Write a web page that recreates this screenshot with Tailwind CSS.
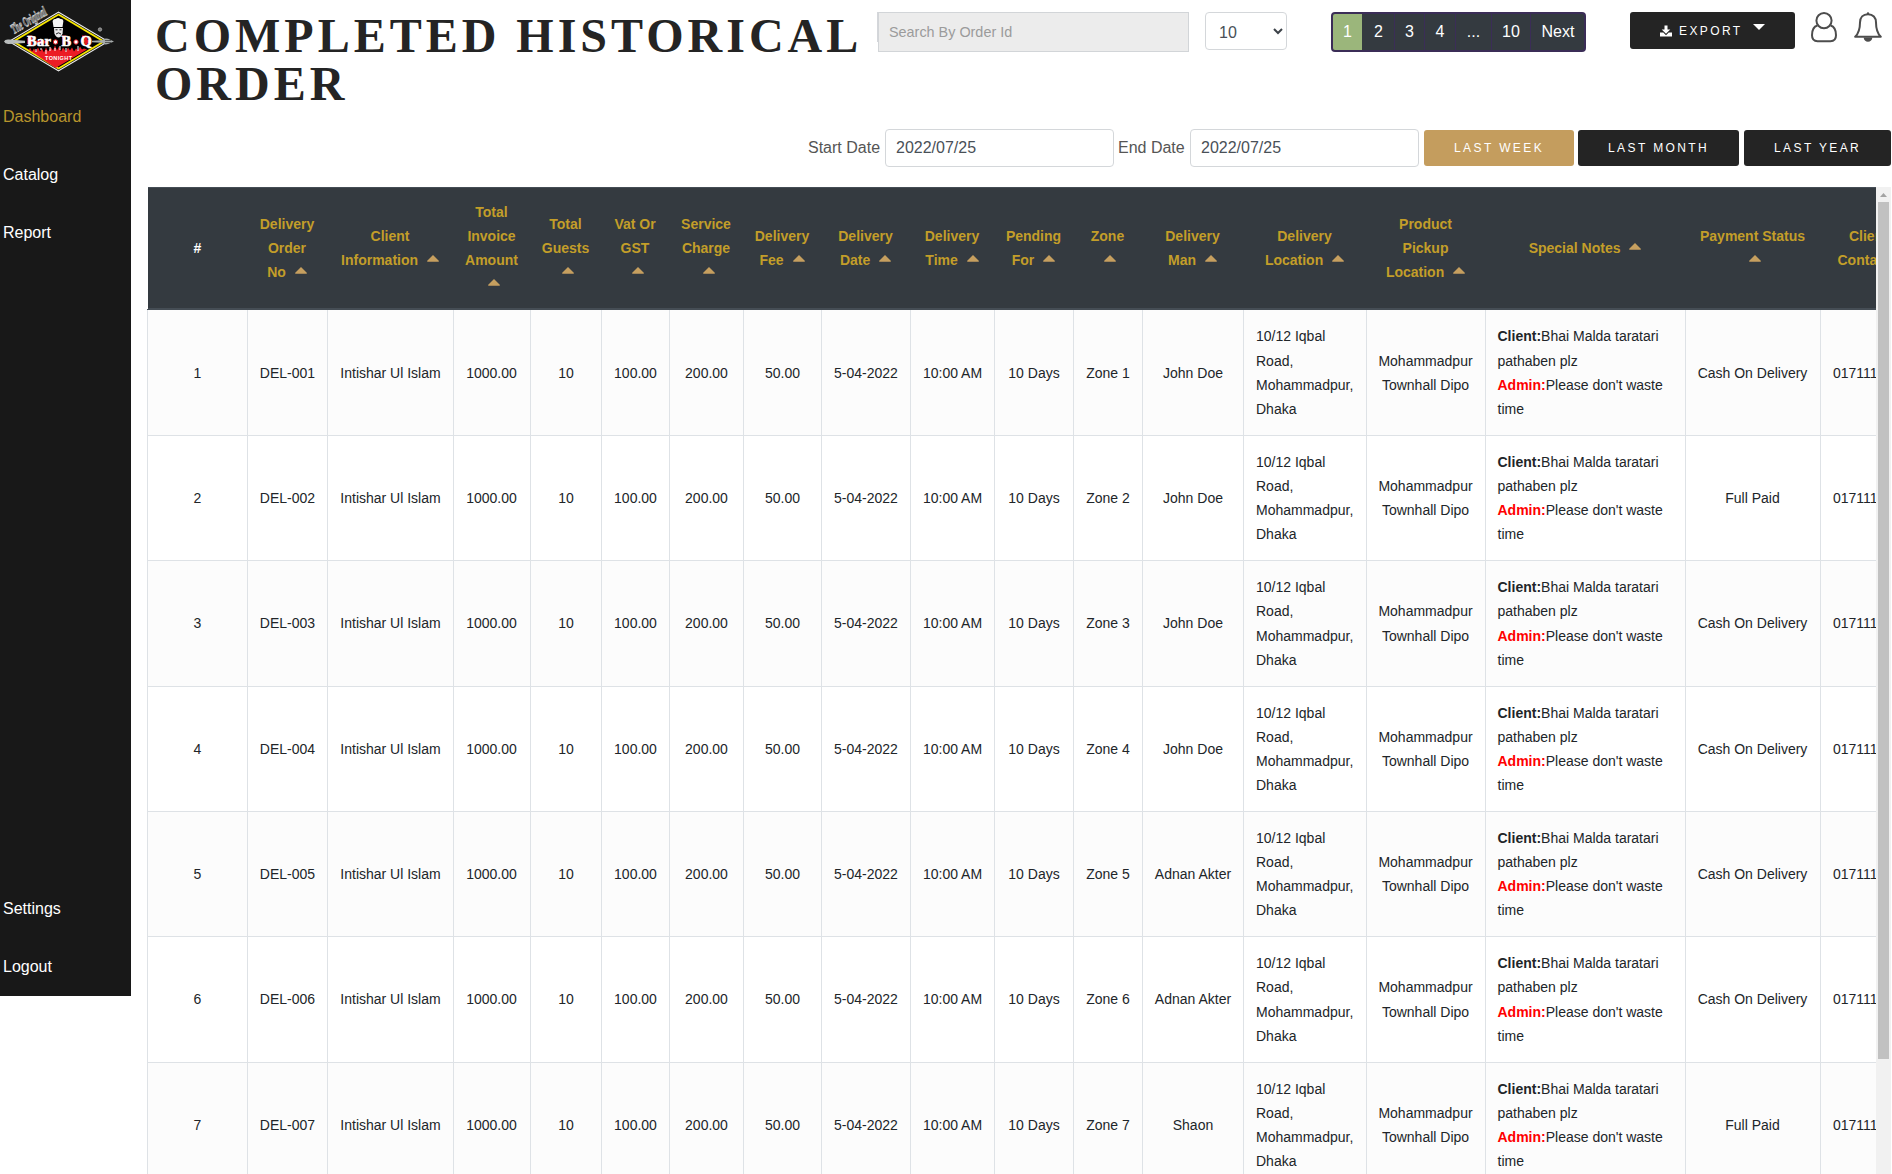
<!DOCTYPE html>
<html lang="en">
<head>
<meta charset="utf-8">
<title>Completed Historical Order</title>
<script src="https://cdn.jsdelivr.net/npm/@tailwindcss/browser@4"></script>
</head>
<body class="bg-white h-[1174px] w-[1892px] overflow-hidden font-['Liberation_Sans',sans-serif] text-[#212529]">
<div class="flex h-[1174px] overflow-hidden">
  <aside class="flex flex-col w-[131px] h-[996px] shrink-0 bg-[#181818] text-white text-base">
    <div class="h-[88px]">
      <svg width="131" height="88" viewBox="0 0 131 88">
        <polygon points="58.5,11.5 109,41.5 58.5,71.5 8,41.5" fill="#f4f4f4"/>
        <polygon points="58.5,12.8 107,41.5 58.5,70.2 10,41.5" fill="#222"/>
        <polygon points="58.5,13.6 105.500,41.5 58.5,69.6 11.500,41.5" fill="#f7e600"/>
        <polygon points="58.5,15.600 102,41.5 58.5,67.4 15,41.5" fill="#000"/>
        <path d="M27 48.500l2 1 1-2 2 4 2-3 2 3 2-4 2 4 2-3 2 4 2-5 2 4 3-4 2 3 2-5 2 5 2-4 2 5 2-4 3 4 2-4 2 3 2-3 2 4 2-3 2 2 2-4 2 3 2-1 3 1-31.500 18.500z" fill="#ec1c24"/>
        <path d="M36 49v3M41 48v2M46 50v4M50 47v4M55 48v3M60 46v4M66 48v4M78 46v5" stroke="#fff" stroke-width="1"/>
        <path d="M4 41.500q1-2.500 5-2l16 1.200v2.200l-16 1q-4 .4-5-2.400z" fill="#b9bdbd"/>
        <path d="M92 40.800l10-.6q2-2.500 6-1.500l6 2.800-6 2.600q-4 1-6-1.300l-10-.6z" fill="#a5aaaa"/>
        <path d="M105 40.500h6M105 42.500h6" stroke="#333" stroke-width=".7"/>
        <path d="M53.500 27l-.9-6q1-2.500 3-2 2.500-2 5 0 2.500-.3 2.800 2l-.9 6z" fill="#f5f5f5"/>
        <path d="M54 28h9l-.4 5.500q-1.600 4-4.100 4t-4.100-4z" fill="#e9e9e9"/>
        <path d="M55.500 29.800h2M59.500 29.800h2M56 34l2.500-1.200L61 34" stroke="#222" stroke-width="1" fill="none"/>
        <circle cx="100" cy="29.500" r="1.700" fill="#777" stroke="#bbb" stroke-width=".7"/>
        <g font-family="Liberation Serif, serif" font-weight="bold" font-size="14" fill="#e01b22" stroke="#e01b22" stroke-width="3.200" stroke-linejoin="round">
          <path d="M28 37h4M62 37h4M82 37h4" />
          <path d="M29 38v6M31 37v8M36 42h12M64 38v7M69 39v5M83 40v2M88 40v3M86 37v8"/>
        </g>
        <g font-family="Liberation Serif, serif" font-weight="bold" font-size="14.500" fill="#fff" stroke="#fff" stroke-width=".6">
          <text x="27" y="46" textLength="24">Bar</text>
          <text x="61.500" y="46">B</text>
          <text x="80.500" y="46">Q</text>
        </g>
        <circle cx="55.500" cy="42" r="2.200" fill="#fff" stroke="#e01b22" stroke-width="1"/>
        <circle cx="76" cy="42" r="2.200" fill="#fff" stroke="#e01b22" stroke-width="1"/>
        <text x="45" y="59.500" textLength="27" font-family="Liberation Sans, sans-serif" font-weight="bold" font-size="5.500" fill="#fff">TONIGHT</text>
        <text transform="translate(14 34) rotate(-30)" textLength="39" lengthAdjust="spacingAndGlyphs" font-family="Liberation Serif, serif" font-style="italic" font-weight="bold" font-size="14" fill="#2a2a2a" stroke="#c8c8c8" stroke-width=".9">The Original</text>
      </svg>
    </div>
    <nav class="flex flex-col grow pl-[3px]">
      <a class="h-[58px] flex items-center text-[#b8952c]">Dashboard</a>
      <a class="h-[58px] flex items-center">Catalog</a>
      <a class="h-[58px] flex items-center">Report</a>
      <a class="h-[58px] flex items-center mt-auto">Settings</a>
      <a class="h-[58px] flex items-center">Logout</a>
    </nav>
  </aside>

  <main class="w-[1761px] shrink-0 flex flex-col">
    <header class="h-[129px] flex items-start pt-3">
      <h1 class="ml-6 w-[722px] shrink-0 font-['Liberation_Serif',serif] font-bold text-[48px] leading-[48px] tracking-[4px] uppercase text-[#242424]">Completed Historical Order</h1>
      <div class="flex">
        <div class="w-px h-[30px] bg-[#d4d6da]"></div>
        <div class="w-[311px] h-10 border border-[#d2d5d8] bg-[#ececec] flex items-center pt-px pl-[10px] text-[14.400px] text-[#9b9b9b]">Search By Order Id</div>
      </div>
      <div class="ml-4 w-[82px] h-[38px] rounded border border-[#d4d7da] flex items-center justify-between pl-[13px] pr-[3px] text-base text-[#495057]">
        <span class="mt-[3px]">10</span>
        <svg width="10" height="8" viewBox="0 0 10 8" fill="none" stroke="#3d4349" stroke-width="2"><path d="M1 2l4 4 4-4"/></svg>
      </div>
      <div class="ml-[44px] w-[255px] h-10 rounded border-2 border-[#3b2d57] bg-[#343a40] flex overflow-hidden text-white text-base leading-[36px] text-center">
        <span class="w-[29px] bg-[#9bb67b]">1</span>
        <span class="w-[33px] pl-px border-r border-[#3b2d57]">2</span>
        <span class="w-[30px] border-r border-[#3b2d57]">3</span>
        <span class="w-[31px] border-r border-[#3b2d57]">4</span>
        <span class="w-[36px] border-r border-[#3b2d57]">...</span>
        <span class="w-[39px] border-r border-[#3b2d57]">10</span>
        <span class="grow pl-px">Next</span>
      </div>
      <div class="ml-[44px] w-[165px] h-[37px] rounded-[3px] bg-[#242424] flex items-center pl-[30px] text-white text-[12px] tracking-[2.400px]">
        <svg width="12" height="12" viewBox="0 0 12 12" fill="#fff"><path d="M4.500 .5h3v4h2.800L6 8.700 1.700 4.500h2.800z"/><path d="M0 7.600h3.300L6 10.200l2.700-2.600H12v3.900H0z"/></svg>
        <span class="ml-[7px]">EXPORT</span>
        <svg class="ml-[10px] -mt-2" width="12" height="6" viewBox="0 0 12 6"><path d="M0 0h12L6 6z" fill="#fff"/></svg>
      </div>
      <svg class="ml-4 shrink-0" width="26" height="31" viewBox="0 0 26 31" fill="none" stroke="#4d4d4d" stroke-width="2"><circle cx="13" cy="8.600" r="7.600"/><path d="M6.400 13.500C3 14.500 1 18.500 1 23.300 1 27 3 29.200 6.500 29.200h13c3.500 0 5.500-2.200 5.500-5.900 0-4.800-2-8.800-5.400-9.800"/></svg>
      <svg class="ml-[17px] shrink-0" width="28" height="31" viewBox="0 0 28 31" fill="none" stroke="#4d4d4d" stroke-width="2"><path d="M14 2.200c-5 0-8 3.400-8 8.300 0 6.500-1 10.500-4.800 14.300h25.600C23 21 22 17 22 10.500c0-4.900-3-8.300-8-8.300z" stroke-linejoin="round"/><path d="M12.800 1.500a1.200 1.200 0 0 1 2.400 0v1h-2.400zM9.700 25.500h8.600a4.300 4.300 0 0 1-8.600 0z" fill="#4d4d4d" stroke="none"/></svg>
    </header>

    <div class="h-[58px] flex items-start text-base text-[#555]">
      <span class="ml-[676px] pl-px w-[78px] leading-[37px] whitespace-nowrap">Start Date</span>
      <div class="w-[229px] h-[38px] rounded border border-[#d4d7da] pl-[10px] leading-[35px] text-[#495057]">2022/07/25</div>
      <span class="ml-1 w-[72px] leading-[37px] whitespace-nowrap">End Date</span>
      <div class="w-[229px] h-[38px] rounded border border-[#d4d7da] pl-[10px] leading-[35px] text-[#495057]">2022/07/25</div>
      <div class="flex mt-px text-[12px] leading-9 tracking-[2.400px] text-white">
        <span class="ml-[5px] w-[150px] h-9 rounded-[3px] bg-[#c49d5e] pl-[30px]">LAST WEEK</span>
        <span class="ml-1 w-[161px] h-9 rounded-[3px] bg-[#242424] pl-[30px]">LAST MONTH</span>
        <span class="ml-[5px] w-[147px] h-9 rounded-[3px] bg-[#242424] pl-[30px]">LAST YEAR</span>
      </div>
    </div>

    <div class="flex ml-4 h-[987px] overflow-hidden">
      <div class="w-[1729px] overflow-hidden shrink-0">
        <table class="table-fixed w-[1781px] border-separate border-spacing-0 text-[14px] leading-[24.100px] whitespace-nowrap text-center">
          <colgroup id="cols"></colgroup>
          <thead><tr id="head" class="h-[123px] font-bold text-[#c39e29]"></tr></thead>
          <tbody id="body"></tbody>
        </table>
      </div>
      <div class="w-[15px] bg-[#f1f1f1] flex flex-col items-center">
        <svg class="mt-[6px]" width="7" height="4" viewBox="0 0 7 4"><path d="M3.500 0L7 4H0z" fill="#a3a3a3"/></svg>
        <div class="mt-[5px] w-[11px] h-[857px] bg-[#c1c1c1]"></div>
      </div>
    </div>
  </main>
</div>
<script>
const widths = [100,80,126,77,71,68,74,78,89,84,79,69,101,123,119,200,135,108];
document.getElementById('cols').innerHTML = widths.map(w => `<col style="width:${w}px">`).join('');
const caret = '<svg class="inline-block align-baseline ml-[5px] mb-[3px]" width="12" height="7" viewBox="0 0 12 7"><path d="M6 0l6 6q0 .8-.8 .8h-10.400q-.8 0-.8-.8z" fill="#c69f5f"/></svg>';
const heads = ['Delivery<br>Order<br>No ','Client<br>Information ','Total<br>Invoice<br>Amount<br>','Total<br>Guests<br>','Vat Or<br>GST<br>','Service<br>Charge<br>','Delivery<br>Fee ','Delivery<br>Date ','Delivery<br>Time ','Pending<br>For ','Zone<br>','Delivery<br>Man ','Delivery<br>Location ','Product<br>Pickup<br>Location ','Special Notes ','Payment Status<br>',"Client's<br>Contact "];
document.getElementById('head').innerHTML =
  '<th class="relative p-0 pl-px align-middle bg-[#343a40] border-t border-b-2 border-[#454d55] text-white">#<span class="absolute left-0 -top-px w-px h-[122px] bg-white"></span></th>' +
  heads.map(h => `<th class="p-0 align-middle bg-[#343a40] border-t border-b-2 border-[#454d55]">${h}${caret}</th>`).join('');
const men = ['John Doe','John Doe','John Doe','John Doe','Adnan Akter','Adnan Akter','Shaon'];
const pays = ['Cash On Delivery','Full Paid','Cash On Delivery','Cash On Delivery','Cash On Delivery','Cash On Delivery','Full Paid'];
const heights = [126,125,126,125,125,126,125];
const cellClass = k => k === 13 || k === 17 ? 'p-0 pl-3 text-left align-middle border-l border-b border-[#dee2e6]'
  : k === 15 ? 'p-0 pl-[11.500px] text-left align-middle border-l border-b border-[#dee2e6]'
  : k === 3 || k === 14 || k === 16 ? 'p-0 pr-px align-middle border-l border-b border-[#dee2e6]'
  : 'p-0 align-middle border-l border-b border-[#dee2e6]';
document.getElementById('body').innerHTML = men.map((man, i) => {
  const n = i + 1;
  const cells = [n,'DEL-00'+n,'Intishar Ul Islam','1000.00','10','100.00','200.00','50.00','5-04-2022','10:00 AM','10 Days','Zone '+n,man,
    '10/12 Iqbal<br>Road,<br>Mohammadpur,<br>Dhaka','Mohammadpur<br>Townhall Dipo',
    '<b>Client:</b>Bhai Malda taratari<br>pathaben plz<br><b class="text-[#f00]">Admin:</b>Please don\'t waste<br>time',pays[i],'01711111111'];
  return `<tr class="${i % 2 ? 'bg-white' : 'bg-[#fcfcfc]'}" style="height:${heights[i]}px">` + cells.map((c, k) =>
    `<td class="${cellClass(k)}"${i ? '' : ' style="padding-top:.3px"'}>${c}</td>`).join('') + '</tr>';
}).join('');
</script>
</body>
</html>
